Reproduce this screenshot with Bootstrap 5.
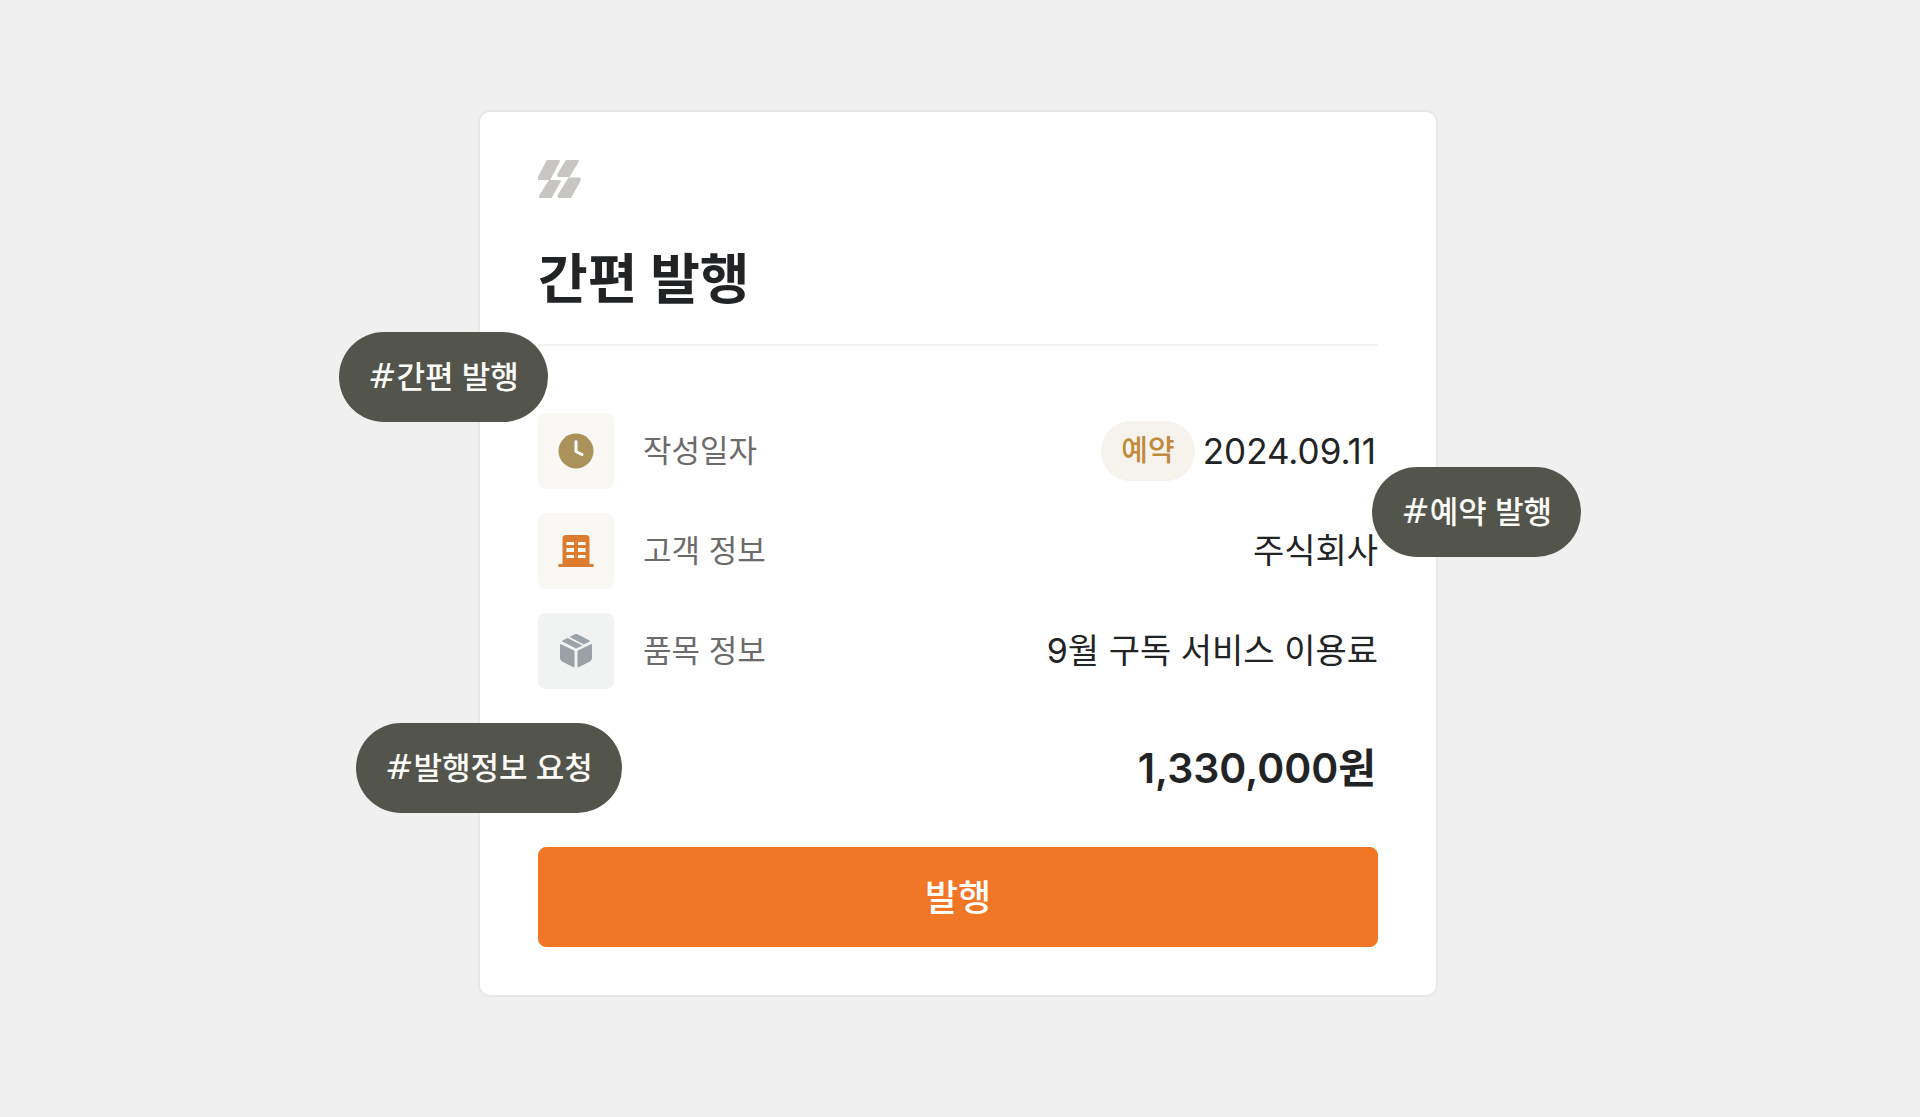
<!DOCTYPE html>
<html lang="ko">
<head>
<meta charset="utf-8">
<meta name="viewport" content="width=device-width, initial-scale=1">
<title>간편 발행</title>
<link href="https://cdn.jsdelivr.net/npm/bootstrap@5.3.0/dist/css/bootstrap.min.css" rel="stylesheet">
<style>
  body { background: #f0f0f0; color: #212325; font-family: Inter, "Noto Sans CJK KR", sans-serif; }
  .stage { padding-top: 110px; padding-bottom: 110px; }
  .issue-card { width: 100%; max-width: 960px; padding: 48px 58px; border: 2px solid #e8e8e6; border-radius: 12px; background: #fff; }
  .issue-title { font-size: 54px; line-height: 80px; font-weight: 700; margin: 42px 0 24px; }
  .divider { height: 2px; background: #f0f0f0; margin-bottom: 67px; }
  .rows { gap: 24px; }
  .icon-box { width: 76px; height: 76px; border-radius: 8px; background: #faf8f4; }
  .icon-box-gray { background: #f1f2f2; }
  .row-label { font-size: 31px; line-height: 48px; color: #6b6b6b; margin-left: 29px; }
  .row-value { font-size: 34px; line-height: 48px; }
  .row-date { font-size: 35px; padding-right: 2px; }
  .reserve { font-size: 29px; line-height: 60px; padding: 0 20px; background: #f6f2ec; color: #c08a3c; font-weight: 500; }
  .amount { font-size: 41px; line-height: 60px; font-weight: 600; margin: 49px 0; padding-right: 2px; }
  .btn-issue { --bs-btn-color: #fff; --bs-btn-bg: #f17726; --bs-btn-border-color: #f17726; --bs-btn-hover-color: #fff; --bs-btn-hover-bg: #e06a1b; --bs-btn-hover-border-color: #e06a1b; font-size: 36px; line-height: 50px; padding: 25px 24px 23px; font-weight: 500; border-radius: 8px; }
  .tag-pill { font-size: 31px; line-height: 46px; padding: 22px 29px; background: #53544c; color: #fbfbf8; font-weight: 500; white-space: nowrap; }
  .tag-pill em { font-family: "DejaVu Sans", sans-serif; font-size: 34px; line-height: 1; }
  .tag-issue { left: -141px; top: 220px; }
  .tag-reserve { right: -145px; top: 355px; }
  .tag-request { left: -124px; top: 611px; }
</style>
</head>
<body>
<main class="stage d-flex justify-content-center pe-1">
  <section class="issue-card position-relative">
    <svg class="d-block" width="43" height="38" viewBox="0 0 43 38" fill="#c8c6c2" stroke="#c8c6c2" stroke-width="2" stroke-linejoin="round" aria-hidden="true">
      <path d="M9.500 1H21L11.500 19H1Q0.500 18 1 17Z"/><path d="M28.500 1H40L31 16H20.500Q20 15 20.500 14Z"/>
      <path d="M11.500 21H22L13 37H2.500Q1.500 37 2 36Z"/><path d="M31 18.500H41.500Q42 19.500 41.500 20.500L32.500 37H21Q20 36 21 35Z"/>
    </svg>
    <h1 class="issue-title">간편 발행</h1>
    <div class="divider"></div>
    <div class="rows d-flex flex-column">
      <div class="d-flex align-items-center">
        <div class="icon-box d-flex align-items-center justify-content-center">
          <svg width="36" height="36" viewBox="0 0 36 36" aria-hidden="true"><circle cx="18" cy="18" r="17.5" fill="#ab925a"/><path d="M18 8.5V18.5L24 21.5" fill="none" stroke="#fff" stroke-width="3" stroke-linecap="round" stroke-linejoin="round"/></svg>
        </div>
        <span class="row-label">작성일자</span>
        <span class="d-flex align-items-center ms-auto">
          <span class="reserve rounded-pill me-2">예약</span>
          <span class="row-value row-date">2024.09.11</span>
        </span>
      </div>
      <div class="d-flex align-items-center">
        <div class="icon-box d-flex align-items-center justify-content-center">
          <svg width="36" height="36" viewBox="0 0 36 36" aria-hidden="true"><path d="M4.500 31V5.500Q4.500 2 8 2H28Q31.500 2 31.500 5.500V31H34.500Q36 31 36 32.500T34.500 34H1.500Q0 34 0 32.500T1.500 31Z" fill="#dd7b2e"/><path d="M8.500 9H16V12H8.500ZM20 9H27.500V12H20ZM8.500 15H16V19H8.500ZM20 15H27.500V19H20ZM8.500 22H16V25H8.500ZM20 22H27.500V25H20Z" fill="#fff"/></svg>
        </div>
        <span class="row-label">고객 정보</span>
        <span class="row-value ms-auto">주식회사</span>
      </div>
      <div class="d-flex align-items-center">
        <div class="icon-box icon-box-gray d-flex align-items-center justify-content-center">
          <svg width="36" height="36" viewBox="0 0 36 36" fill="#9aa2a7" stroke="#9aa2a7" stroke-width="1" stroke-linejoin="round" aria-hidden="true"><path d="M16 2Q18 1 20 2L31.500 8L26 11L12.500 4ZM9.500 5.500L23.500 12.500L18 15L4.500 8Z"/><path d="M2.500 11.500L16 18V34L4 28Q2.500 27 2.500 25.500ZM33.500 11.500L20 18V34L32 28Q33.500 27 33.500 25.500Z"/></svg>
        </div>
        <span class="row-label">품목 정보</span>
        <span class="row-value ms-auto">9월 구독 서비스 이용료</span>
      </div>
    </div>
    <p class="amount text-end">1,330,000원</p>
    <button type="button" class="btn btn-issue d-block w-100">발행</button>

    <span class="tag-pill tag-issue rounded-pill position-absolute"><em>#</em>간편 발행</span>
    <span class="tag-pill tag-reserve rounded-pill position-absolute"><em>#</em>예약 발행</span>
    <span class="tag-pill tag-request rounded-pill position-absolute"><em>#</em>발행정보 요청</span>
  </section>
</main>
<script src="https://cdn.jsdelivr.net/npm/bootstrap@5.3.0/dist/js/bootstrap.bundle.min.js"></script>
</body>
</html>
